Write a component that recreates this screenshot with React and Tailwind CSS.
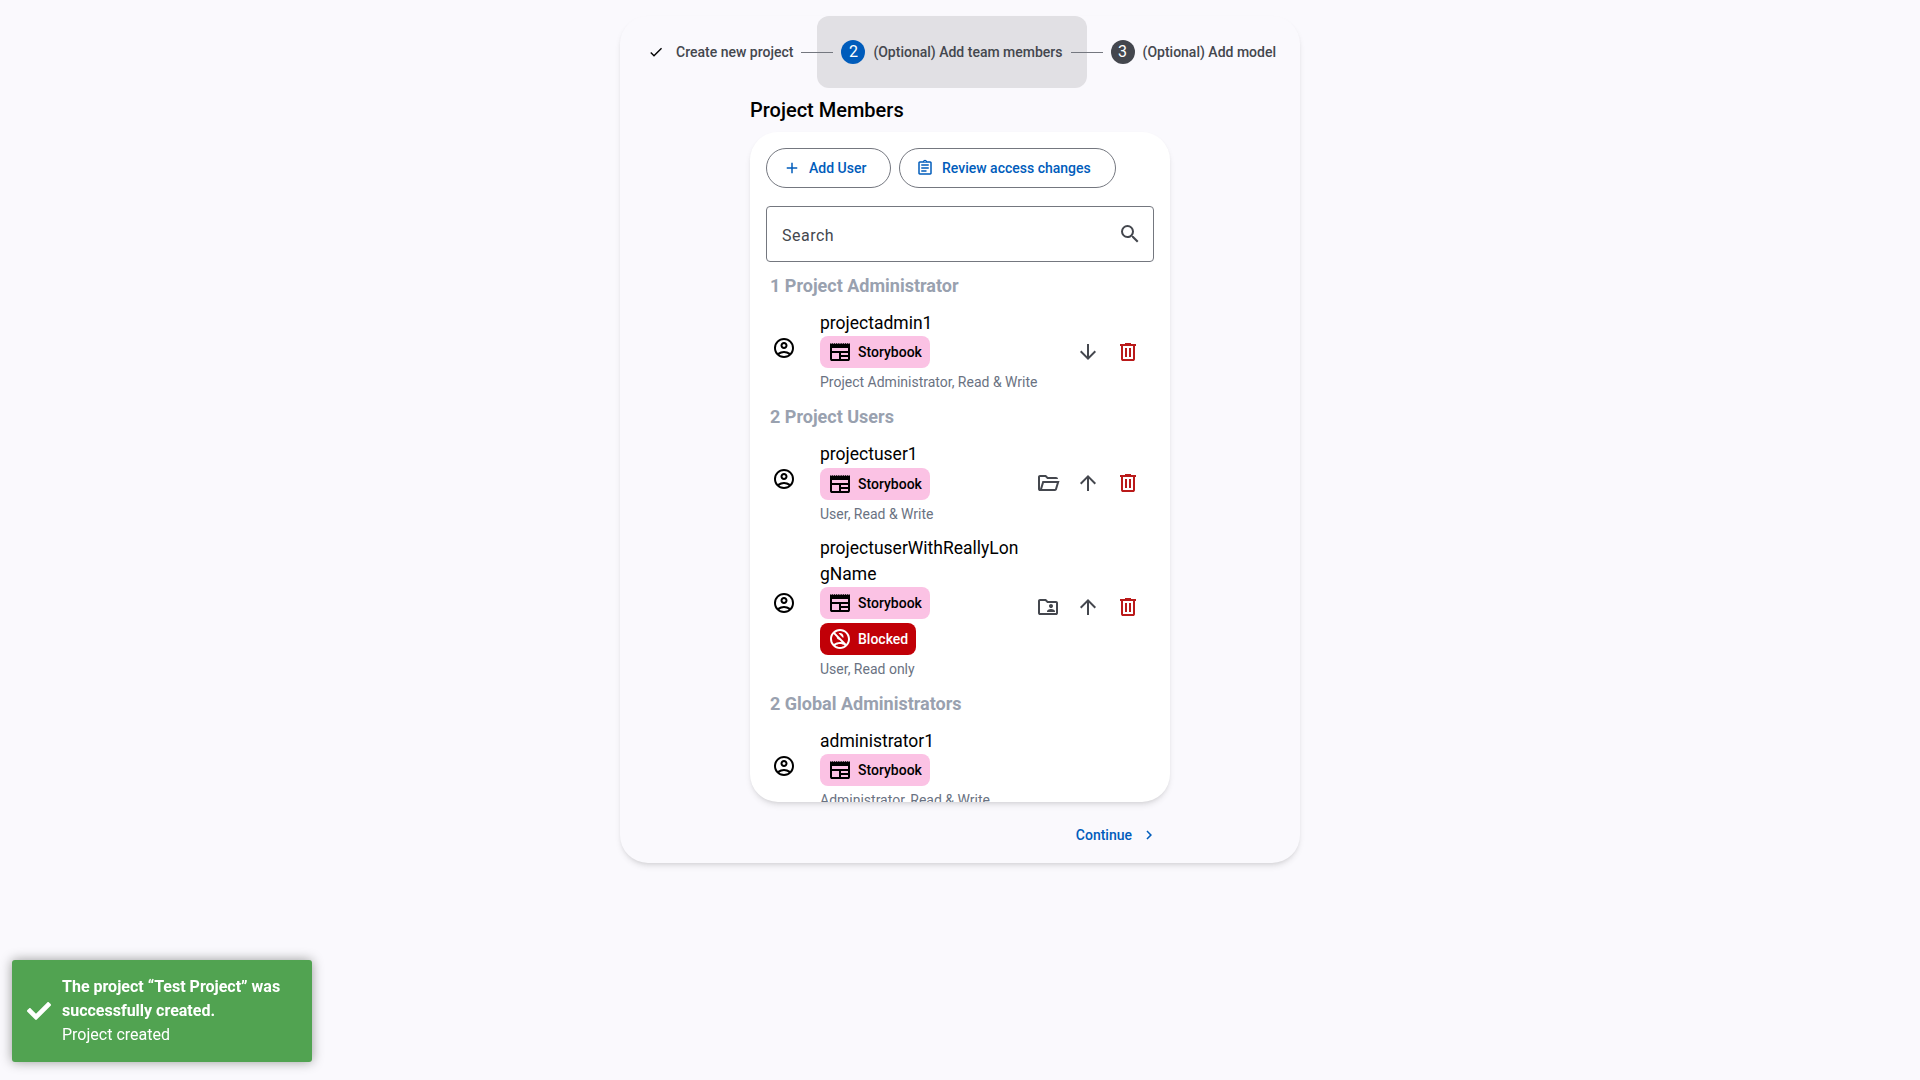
import React from "react";
import {
  MdAdd,
  MdArrowDownward,
  MdArrowUpward,
  MdCheck,
  MdChevronRight,
  MdOutlineNoAccounts,
  MdSearch,
} from "react-icons/md";
import { FaCheck } from "react-icons/fa";

const PATHS = {
  account:
    "M5.85 17.1q1.275-.975 2.85-1.537T12 15t3.3.563 2.85 1.537q.875-1.025 1.363-2.325T20 12q0-3.325-2.337-5.663T12 4 6.337 6.338 4 12q0 1.475.488 2.775T5.85 17.1M12 13q-1.475 0-2.488-1.012T8.5 9.5t1.013-2.488T12 6t2.488 1.013T15.5 9.5t-1.012 2.488T12 13m0 9q-2.075 0-3.9-.788t-3.175-2.137T2.788 15.9 2 12t.788-3.9 2.137-3.175T8.1 2.788 12 2t3.9.788 3.175 2.137T21.213 8.1 22 12t-.788 3.9-2.137 3.175-3.175 2.138T12 22m0-2q1.325 0 2.5-.387t2.15-1.113q-.975-.725-2.15-1.112T12 17t-2.5.388T7.35 18.5q.975.725 2.15 1.113T12 20m0-9q.65 0 1.075-.425T13.5 9.5t-.425-1.075T12 8t-1.075.425T10.5 9.5t.425 1.075T12 11",
  trash:
    "M7 21q-.825 0-1.412-.587T5 19V6H4V4h5V3h6v1h5v2h-1v13q0 .825-.587 1.413T17 21zM17 6H7v13h10zM9 17h2V8H9zm4 0h2V8h-2z",
  folderOpen:
    "M4 20q-.825 0-1.412-.587T2 18V6q0-.825.588-1.412T4 4h6l2 2h8q.825 0 1.413.588T22 8H11.175l-2-2H4v12l2.4-8h17.1l-2.575 8.575q-.2.65-.737 1.038T19 20zm2.1-2H19l1.8-6H7.9z",
  folderShared:
    "M4 20q-.825 0-1.412-.587T2 18V6q0-.825.588-1.412T4 4h6l2 2h8q.825 0 1.413.588T22 8v10q0 .825-.587 1.413T20 20zm0-2h16V8h-8.825l-2-2H4zm7-1h8v-.55q0-1.125-1.1-1.787T15 14t-2.9.663T11 16.45zm4-4q.825 0 1.413-.587T17 11t-.587-1.412T15 9t-1.412.588T13 11t.588 1.413T15 13",
  assignment:
    "M5 21q-.825 0-1.412-.587T3 19V5q0-.825.588-1.412T5 3h4.2q.325-.9 1.088-1.45T12 1t1.713.55T14.8 3H19q.825 0 1.413.588T21 5v14q0 .825-.587 1.413T19 21zm0-2h14V5H5zm2-2h7v-2H7zm0-4h10v-2H7zm0-4h10V7H7zm5-4.75q.325 0 .538-.213t.212-.537-.213-.537T12 2.75t-.537.213-.213.537.213.538.537.212",
  newspaper:
    "M4 21q-.825 0-1.413-.588T2 19V3l1.11 1.1L4.22 3l1.11 1.1L6.44 3l1.11 1.1L8.66 3l1.12 1.1L10.89 3 12 4.1 13.11 3l1.11 1.1L15.33 3l1.11 1.1L17.56 3l1.11 1.1L19.78 3l1.11 1.1L22 3v16q0 .825-.587 1.412T20 21zM4 19h7v-6H4zm9 0h7v-2h-7zm0-4h7v-2h-7zM4 11h16V8H4z",
};

function Icon({ name, className }) {
  return (
    <svg viewBox="0 0 24 24" fill="currentColor" className={className}>
      <path d={PATHS[name]} fillRule={name === "newspaper" ? "evenodd" : undefined} />
    </svg>
  );
}

function Chip({ blocked }) {
  return (
    <div
      className={
        "flex h-8 items-center gap-1.5 rounded-lg px-2 text-sm font-medium " +
        (blocked ? "bg-[#c10007] text-white" : "bg-[#fbc2e4] text-black")
      }
    >
      {blocked ? <MdOutlineNoAccounts className="size-6" /> : <Icon name="newspaper" className="size-6" />}
      {blocked ? "Blocked" : "Storybook"}
    </div>
  );
}

function Member({ name, role, blocked, folder, move }) {
  return (
    <div className="mb-[9.125px] flex items-center">
      <Icon name="account" className="mb-[9px] ml-[2px] size-6 shrink-0" />
      <div className="ml-6 flex w-[210px] shrink-0 flex-col items-start">
        <div className="mb-[0.25px] w-[204px] text-[17.5px] leading-[26px] break-all">{name}</div>
        <div className="flex flex-col items-start gap-1">
          <Chip />
          {blocked && <Chip blocked />}
        </div>
        <div className="h-[26px] text-sm leading-[28px] whitespace-nowrap text-[#6a7282]">{role}</div>
      </div>
      {move && (
        <div
          className={
            "ml-auto flex items-center gap-4 pr-[10px] text-[#44474e] " + (blocked ? "mb-[2px]" : "mb-px")
          }
        >
          {folder && <Icon name={folder} className="size-6" />}
          {move === "up" ? <MdArrowUpward className="size-6" /> : <MdArrowDownward className="size-6" />}
          <Icon name="trash" className="size-6 text-[#ba1a1a]" />
        </div>
      )}
    </div>
  );
}

function Section({ title, children }) {
  return (
    <>
      <h3 className="h-[38px] text-lg leading-[27px] font-bold text-[#99a1af]">{title}</h3>
      {children}
    </>
  );
}

function StepLine() {
  return <div className="relative -mx-4 h-px w-8 shrink-0 bg-[#74777f]" />;
}

export default function App() {
  return (
    <div className="flex h-[1080px] flex-col items-center overflow-hidden bg-[#faf9fd] pt-4 font-['Roboto',sans-serif] text-black">
      <div className="flex h-[847px] w-[680px] shrink-0 flex-col rounded-[28px] bg-[#faf9fd] shadow-[0_4px_6px_-1px_rgba(0,0,0,0.1),0_2px_4px_-2px_rgba(0,0,0,0.1)]">
        <div className="flex h-[72px] shrink-0 items-center text-sm font-medium whitespace-nowrap text-[#44474e]">
          <div className="flex h-full items-center gap-2 pr-6 pl-6">
            <span className="flex size-6 items-center justify-center text-black">
              <MdCheck className="size-4" />
            </span>
            Create new project
          </div>
          <StepLine />
          <div className="flex h-full w-[270px] items-center gap-2 rounded-xl bg-[#e1e0e4] px-6">
            <span className="flex size-6 items-center justify-center rounded-full bg-[#005cbb] text-base font-normal text-white">2</span>
            (Optional) Add team members
          </div>
          <StepLine />
          <div className="flex h-full items-center gap-2 pr-6 pl-6">
            <span className="flex size-6 items-center justify-center rounded-full bg-[#44474e] text-base font-normal text-white">3</span>
            (Optional) Add model
          </div>
        </div>

        <div className="mx-auto flex w-[420px] flex-col">
          <h2 className="h-11 pt-2 text-xl leading-7 font-medium">Project Members</h2>
          <div className="h-[670px] overflow-hidden rounded-[28px] bg-white px-4 pt-4 shadow-[0_4px_6px_-1px_rgba(0,0,0,0.1),0_2px_4px_-2px_rgba(0,0,0,0.1)]">
            <div className="flex gap-2 text-sm font-medium text-[#005cbb]">
              <button className="flex h-10 w-[125px] items-center gap-2 rounded-full border border-[#74777f] pl-4">
                <MdAdd className="size-[18px]" />
                Add User
              </button>
              <button className="flex h-10 w-[217px] items-center gap-2 rounded-full border border-[#74777f] pl-4">
                <Icon name="assignment" className="size-[18px]" />
                Review access changes
              </button>
            </div>
            <div className="mt-[18px] mb-[9.875px] flex h-14 items-center justify-between rounded border border-[#74777f] pr-[11px] pl-[15px] text-base tracking-[0.5px] text-[#44474e]">
              <span className="pt-1">Search</span>
              <MdSearch className="size-6" />
            </div>
            <div className="px-1">
              <Section title="1 Project Administrator">
                <Member name="projectadmin1" role="Project Administrator, Read & Write" move="down" />
              </Section>
              <Section title="2 Project Users">
                <Member name="projectuser1" role="User, Read & Write" folder="folderOpen" move="up" />
                <Member
                  name="projectuserWithReallyLongName"
                  role="User, Read only"
                  blocked
                  folder="folderShared"
                  move="up"
                />
              </Section>
              <Section title="2 Global Administrators">
                <Member name="administrator1" role="Administrator, Read & Write" />
              </Section>
            </div>
          </div>
          <div className="flex justify-end pt-[13px] pr-3">
            <button className="flex h-10 items-center gap-2 text-sm font-medium text-[#005cbb]">
              Continue
              <MdChevronRight className="size-[18px]" />
            </button>
          </div>
        </div>
      </div>

      <div className="fixed bottom-[18px] left-3 flex w-[300px] items-center gap-[11px] rounded-[3px] bg-[#51a351] p-[15px] text-base text-white shadow-[0_0_12px_#999]">
        <FaCheck className="size-6 shrink-0" />
        <div>
          <div className="font-bold">The project “Test Project” was successfully created.</div>
          <div>Project created</div>
        </div>
      </div>
    </div>
  );
}
